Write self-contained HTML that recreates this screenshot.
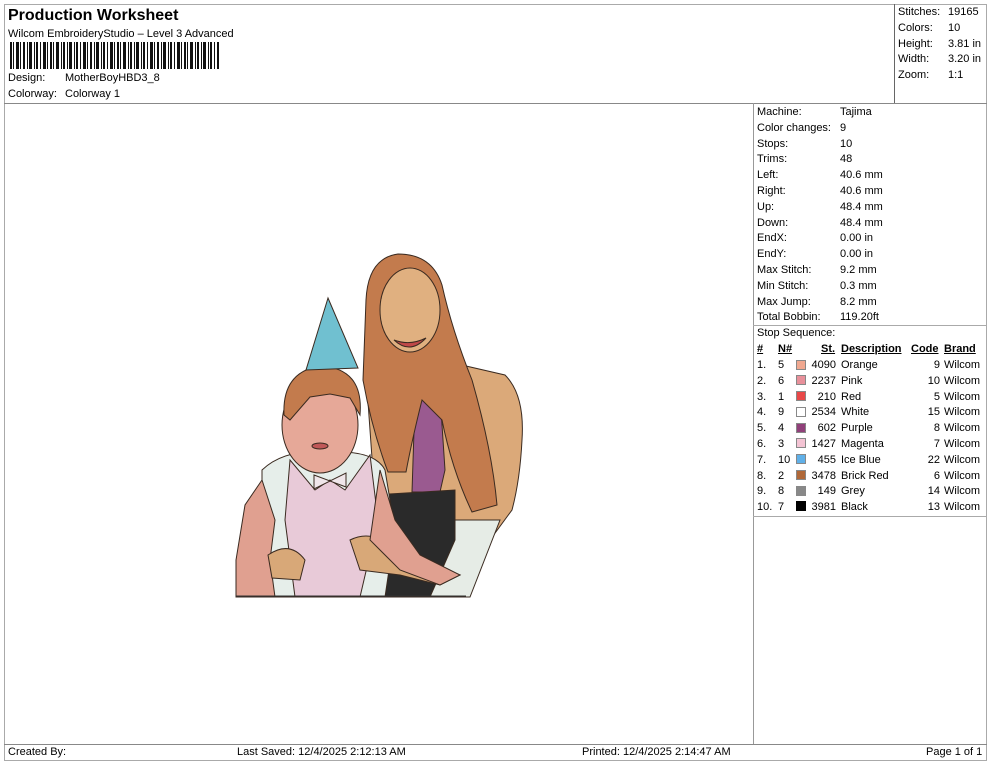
<!DOCTYPE html>
<html><head><meta charset="utf-8"><style>
*{margin:0;padding:0;box-sizing:border-box}
body{width:990px;height:762px;background:#fff;position:relative;overflow:hidden;font-family:"Liberation Sans",Arial,sans-serif;font-size:11px;color:#000}
.a{position:absolute;white-space:nowrap;line-height:13px}
.hl{position:absolute;height:1px;background:#999}
.vl{position:absolute;width:1px;background:#999}
.sw{position:absolute;width:10px;height:10px;border:1px solid #888}
u{text-decoration:underline}
</style></head><body>
<div class="hl" style="left:4px;top:4px;width:983px;background:#aaa"></div>
<div class="vl" style="left:4px;top:4px;height:757px;background:#aaa"></div>
<div class="vl" style="left:986px;top:4px;height:757px;background:#aaa"></div>
<div class="hl" style="left:4px;top:103px;width:983px;background:#888"></div>
<div class="vl" style="left:894px;top:4px;height:99px;background:#666"></div>
<div class="vl" style="left:753px;top:103px;height:641px;background:#999"></div>
<div class="hl" style="left:753px;top:325px;width:233px;background:#aaa"></div>
<div class="hl" style="left:753px;top:516px;width:233px;background:#aaa"></div>
<div class="hl" style="left:4px;top:744px;width:983px;background:#888"></div>
<div class="hl" style="left:4px;top:760px;width:983px;background:#aaa"></div>

<div class="a" style="left:8px;top:6px;font-size:16px;font-weight:bold;line-height:19px">Production Worksheet</div>
<div class="a" style="left:8px;top:28px">Wilcom EmbroideryStudio – Level 3 Advanced</div>
<svg style="position:absolute;left:10px;top:42px" width="210" height="27">
<g fill="#111">
<rect x="0" width="2" height="27"/><rect x="3" width="1" height="27"/><rect x="6" width="3" height="27"/><rect x="10" width="1" height="27"/><rect x="13" width="2" height="27"/><rect x="17" width="1" height="27"/><rect x="19" width="3" height="27"/><rect x="24" width="1" height="27"/><rect x="26" width="2" height="27"/><rect x="30" width="1" height="27"/><rect x="33" width="3" height="27"/><rect x="37" width="1" height="27"/><rect x="40" width="2" height="27"/><rect x="43" width="1" height="27"/><rect x="46" width="3" height="27"/><rect x="51" width="1" height="27"/><rect x="53" width="2" height="27"/><rect x="57" width="1" height="27"/><rect x="59" width="3" height="27"/><rect x="64" width="1" height="27"/><rect x="66" width="2" height="27"/><rect x="70" width="1" height="27"/><rect x="73" width="3" height="27"/><rect x="77" width="1" height="27"/><rect x="80" width="2" height="27"/><rect x="84" width="1" height="27"/><rect x="86" width="3" height="27"/><rect x="91" width="1" height="27"/><rect x="93" width="2" height="27"/><rect x="97" width="1" height="27"/><rect x="100" width="3" height="27"/><rect x="104" width="1" height="27"/><rect x="107" width="2" height="27"/><rect x="110" width="1" height="27"/><rect x="113" width="3" height="27"/><rect x="118" width="1" height="27"/><rect x="120" width="2" height="27"/><rect x="124" width="1" height="27"/><rect x="126" width="3" height="27"/><rect x="131" width="1" height="27"/><rect x="133" width="2" height="27"/><rect x="137" width="1" height="27"/><rect x="140" width="3" height="27"/><rect x="144" width="1" height="27"/><rect x="147" width="2" height="27"/><rect x="151" width="1" height="27"/><rect x="153" width="3" height="27"/><rect x="158" width="1" height="27"/><rect x="160" width="2" height="27"/><rect x="164" width="1" height="27"/><rect x="167" width="3" height="27"/><rect x="171" width="1" height="27"/><rect x="174" width="2" height="27"/><rect x="177" width="1" height="27"/><rect x="180" width="3" height="27"/><rect x="185" width="1" height="27"/><rect x="187" width="2" height="27"/><rect x="191" width="1" height="27"/><rect x="193" width="3" height="27"/><rect x="198" width="1" height="27"/><rect x="200" width="2" height="27"/><rect x="204" width="1" height="27"/><rect x="207" width="2" height="27"/>
</g></svg>
<div class="a" style="left:8px;top:72px">Design:</div><div class="a" style="left:65px;top:72px">MotherBoyHBD3_8</div>
<div class="a" style="left:8px;top:88px">Colorway:</div><div class="a" style="left:65px;top:88px">Colorway 1</div>

<div class="a" style="left:898px;top:5px;line-height:15.8px">Stitches:<br>Colors:<br>Height:<br>Width:<br>Zoom:</div>
<div class="a" style="left:948px;top:5px;line-height:15.8px">19165<br>10<br>3.81 in<br>3.20 in<br>1:1</div>

<div class="a" style="left:757px;top:105px;line-height:15.8px">Machine:<br>Color changes:<br>Stops:<br>Trims:<br>Left:<br>Right:<br>Up:<br>Down:<br>EndX:<br>EndY:<br>Max Stitch:<br>Min Stitch:<br>Max Jump:<br>Total Bobbin:</div>
<div class="a" style="left:840px;top:105px;line-height:15.8px">Tajima<br>9<br>10<br>48<br>40.6 mm<br>40.6 mm<br>48.4 mm<br>48.4 mm<br>0.00 in<br>0.00 in<br>9.2 mm<br>0.3 mm<br>8.2 mm<br>119.20ft</div>
<div class="a" style="left:757px;top:327px">Stop Sequence:</div>

<div class="a" style="left:757px;top:343px;font-weight:bold"><u>#</u></div>
<div class="a" style="left:778px;top:343px;font-weight:bold"><u>N#</u></div>
<div class="a" style="left:821px;top:343px;font-weight:bold"><u>St.</u></div>
<div class="a" style="left:841px;top:343px;font-weight:bold"><u>Description</u></div>
<div class="a" style="left:911px;top:343px;font-weight:bold"><u>Code</u></div>
<div class="a" style="left:944px;top:343px;font-weight:bold"><u>Brand</u></div>

<div class="a" style="left:757px;top:358px;line-height:15.8px">1.<br>2.<br>3.<br>4.<br>5.<br>6.<br>7.<br>8.<br>9.<br>10.</div>
<div class="a" style="left:778px;top:358px;line-height:15.8px">5<br>6<br>1<br>9<br>4<br>3<br>10<br>2<br>8<br>7</div>
<div class="a" style="left:806px;top:358px;width:30px;text-align:right;line-height:15.8px">4090<br>2237<br>210<br>2534<br>602<br>1427<br>455<br>3478<br>149<br>3981</div>
<div class="a" style="left:841px;top:358px;line-height:15.8px">Orange<br>Pink<br>Red<br>White<br>Purple<br>Magenta<br>Ice Blue<br>Brick Red<br>Grey<br>Black</div>
<div class="a" style="left:910px;top:358px;width:30px;text-align:right;line-height:15.8px">9<br>10<br>5<br>15<br>8<br>7<br>22<br>6<br>14<br>13</div>
<div class="a" style="left:944px;top:358px;line-height:15.8px">Wilcom<br>Wilcom<br>Wilcom<br>Wilcom<br>Wilcom<br>Wilcom<br>Wilcom<br>Wilcom<br>Wilcom<br>Wilcom</div>
<div class="sw" style="left:796px;top:360px;background:#f0a890"></div>
<div class="sw" style="left:796px;top:375px;background:#e8909a"></div>
<div class="sw" style="left:796px;top:391px;background:#e84848"></div>
<div class="sw" style="left:796px;top:407px;background:#fff"></div>
<div class="sw" style="left:796px;top:423px;background:#90407a"></div>
<div class="sw" style="left:796px;top:438px;background:#f4c4d4"></div>
<div class="sw" style="left:796px;top:454px;background:#60b0e8"></div>
<div class="sw" style="left:796px;top:470px;background:#b06838"></div>
<div class="sw" style="left:796px;top:486px;background:#888"></div>
<div class="sw" style="left:796px;top:501px;background:#000;border-color:#000"></div>

<div class="a" style="left:8px;top:746px">Created By:</div>
<div class="a" style="left:237px;top:746px">Last Saved: 12/4/2025 2:12:13 AM</div>
<div class="a" style="left:582px;top:746px">Printed: 12/4/2025 2:14:47 AM</div>
<div class="a" style="left:926px;top:746px">Page 1 of 1</div>

<svg style="position:absolute;left:0;top:0" width="990" height="762" stroke="#3a2a20" stroke-width="1">
<path d="M365 360 Q400 345 440 360 L505 375 Q525 395 522 440 Q520 480 512 510 L490 540 L465 597 L380 597 L375 500 Z" fill="#dba979"/>
<path d="M455 520 L500 520 L470 597 L430 597 Z" fill="#e6ece6"/>
<path d="M415 400 L440 395 L445 470 L440 492 L412 492 Z" fill="#9a5a90"/>
<path d="M372 495 L455 490 L455 540 L430 597 L372 597 Z" fill="#2a2a2a"/>
<path d="M366 300 Q368 258 398 254 Q432 254 442 285 Q452 330 472 380 Q492 450 497 505 L472 512 Q452 470 442 420 L422 400 Q412 440 406 472 L388 472 Q372 430 363 380 Z" fill="#c37b4d"/>
<ellipse cx="410" cy="310" rx="30" ry="42" fill="#e0b080"/>
<path d="M394 340 Q410 355 426 338 Q410 346 394 340 Z" fill="#c04848"/>
<path d="M262 470 Q285 448 330 452 Q375 450 385 470 L395 530 L385 597 L270 597 L262 540 Z" fill="#e6eeea"/>
<path d="M290 460 L315 490 L330 480 L345 490 L370 455 L378 520 L360 597 L295 597 L285 520 Z" fill="#e8cad8"/>
<path d="M314 475 L330 481 L346 473 L346 487 L330 481 L314 489 Z" fill="#f0e6ea"/>
<path d="M262 480 L245 505 L236 560 L236 597 L275 597 L270 560 L275 520 Z" fill="#e0a090"/>
<path d="M268 555 Q290 540 305 560 L300 580 L272 578 Z" fill="#d8a878"/>
<path d="M350 540 Q370 530 390 545 L420 560 L460 575 L440 585 L400 575 L360 570 Z" fill="#d8a878"/>
<path d="M380 470 L395 520 L420 555 L460 575 L440 585 L400 570 L370 540 Z" fill="#e0a090"/>
<ellipse cx="320" cy="425" rx="38" ry="48" fill="#e6a898"/>
<path d="M284 415 Q282 372 320 366 Q364 368 360 415 L350 398 L330 394 L310 397 L290 420 Z" fill="#c37b4d"/>
<ellipse cx="320" cy="446" rx="8" ry="3" fill="#c05858"/>
<path d="M328 298 L306 370 L358 368 Z" fill="#70c0d0"/>
<line x1="236" y1="596" x2="466" y2="596" stroke="#333"/>
</svg>
</body></html>
